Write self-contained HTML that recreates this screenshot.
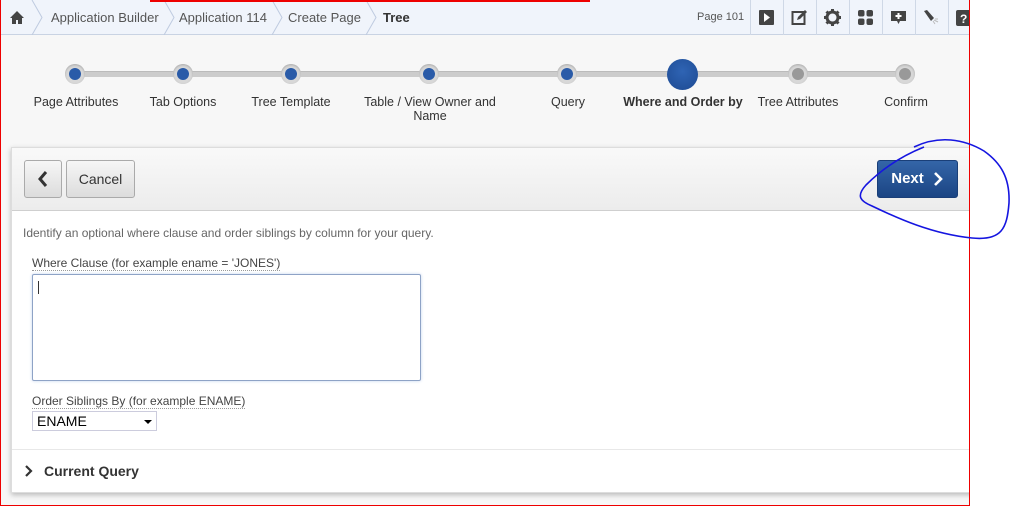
<!DOCTYPE html>
<html><head><style>
*{margin:0;padding:0;box-sizing:border-box}
body{width:1012px;height:506px;background:#fff;font-family:"Liberation Sans",Arial,sans-serif;position:relative;overflow:hidden}
#frame{position:absolute;left:0;top:0;width:970px;height:506px;border:1px solid #e00;border-top:none;overflow:hidden;background:#f7f7f7}
#top{position:absolute;left:0;top:0;width:970px;height:35px;background:#f0f4fb;border-bottom:1px solid #c9d3e3}
.bc{position:absolute;top:0;height:35px;line-height:35px;font-size:13px;color:#555}
.sep{position:absolute;top:0;width:1px;height:35px;background:#cfd8e6}
.chev{position:absolute;top:0}
.ic{position:absolute;top:9px;width:17px;height:17px}
.step{position:absolute;top:64px;width:20px;height:20px;border-radius:50%;background:#d8d8d8;box-shadow:inset 0 1px 2px #aaa}
.step i{position:absolute;left:4px;top:4px;width:12px;height:12px;border-radius:50%;background:#2a5ba8}
.step.g i{background:#999}
.lbl{position:absolute;top:95px;font-size:12.5px;color:#333;text-align:center;width:150px;line-height:14px}
#panel{position:absolute;left:10px;top:147px;width:970px;height:346px;background:#fff;border:1px solid #ddd;box-shadow:0 2px 5px rgba(0,0,0,.25)}
#tb{position:absolute;left:0;top:0;width:100%;height:63px;background:linear-gradient(#f9f9f9,#ececec);border-bottom:1px solid #cfcfcf}
.btn{position:absolute;top:12px;height:38px;border:1px solid #aaa;border-radius:3px;background:linear-gradient(#f6f6f6,#dcdcdc);font-size:14px;color:#333;line-height:36px;text-align:center}
</style></head><body>
<div id="frame">
<div id="top">
 <svg style="position:absolute;left:8px;top:10px" width="16" height="15" viewBox="0 0 16 15"><path d="M8 1L1 8h2v6h4v-4h2v4h4V8h2z" fill="#444"/></svg>
 <svg class="chev" style="left:30px" width="12" height="35"><path d="M1 0L11 17.5L1 35" fill="none" stroke="#bfcbe0"/></svg>
 <div class="bc" style="left:50px">Application Builder</div>
 <svg class="chev" style="left:162px" width="12" height="35"><path d="M1 0L11 17.5L1 35" fill="none" stroke="#bfcbe0"/></svg>
 <div class="bc" style="left:178px">Application 114</div>
 <svg class="chev" style="left:270px" width="12" height="35"><path d="M1 0L11 17.5L1 35" fill="none" stroke="#bfcbe0"/></svg>
 <div class="bc" style="left:287px">Create Page</div>
 <svg class="chev" style="left:364px" width="12" height="35"><path d="M1 0L11 17.5L1 35" fill="none" stroke="#bfcbe0"/></svg>
 <div class="bc" style="left:382px;color:#333;font-weight:bold">Tree</div>
 <div class="bc" style="left:696px;font-size:11px">Page 101</div>
 <div class="sep" style="left:749px"></div><div class="sep" style="left:782px"></div><div class="sep" style="left:815px"></div><div class="sep" style="left:848px"></div><div class="sep" style="left:881px"></div><div class="sep" style="left:914px"></div><div class="sep" style="left:947px"></div>
 <svg class="ic" style="left:757px" viewBox="0 0 17 17"><rect x="1" y="1" width="15" height="15" rx="1" fill="#444"/><path d="M6 4l6 4.5L6 13z" fill="#fff"/></svg>
 <svg class="ic" style="left:790px" viewBox="0 0 17 17"><rect x="1.5" y="3" width="12" height="12" fill="none" stroke="#444" stroke-width="2"/><path d="M6 11l1-3 7-7 2 2-7 7z" fill="#444"/></svg>
 <svg class="ic" style="left:823px" viewBox="0 0 17 17"><circle cx="8.5" cy="8.5" r="5.5" fill="none" stroke="#444" stroke-width="3"/><g stroke="#444" stroke-width="3"><path d="M8.5 0v4M8.5 13v4M0 8.5h4M13 8.5h4M2.5 2.5l3 3M11.5 11.5l3 3M14.5 2.5l-3 3M5.5 11.5l-3 3"/></g></svg>
 <svg class="ic" style="left:856px" viewBox="0 0 17 17"><rect x="1" y="1" width="6.5" height="6.5" rx="2" fill="#444"/><rect x="9.5" y="1" width="6.5" height="6.5" rx="2" fill="#444"/><rect x="1" y="9.5" width="6.5" height="6.5" rx="2" fill="#444"/><rect x="9.5" y="9.5" width="6.5" height="6.5" rx="2" fill="#444"/></svg>
 <svg class="ic" style="left:889px" viewBox="0 0 17 17"><path d="M1 2h15v10h-6l-1.5 3-1.5-3H1z" fill="#444"/><path d="M8.5 4v6M5.5 7h6" stroke="#fff" stroke-width="2"/></svg>
 <svg class="ic" style="left:922px" viewBox="0 0 17 17"><path d="M1 2l3-1 7 8-3 3z" fill="#444"/><path d="M11 11l4 2M12 10l3 0M10 12l2 3" stroke="#bbb"/></svg>
 <svg class="ic" style="left:955px" viewBox="0 0 17 17"><rect x="0" y="1" width="16" height="16" rx="2" fill="#444"/><text x="4" y="14" font-size="12" font-weight="bold" fill="#fff" font-family="Liberation Sans">?</text></svg>
</div>
<div style="position:absolute;left:74px;top:71px;width:830px;height:6px;background:#ccc;border-top:1px solid #bbb"></div>
<div class="step" style="left:64px"><i></i></div>
<div class="step" style="left:172px"><i></i></div>
<div class="step" style="left:280px"><i></i></div>
<div class="step" style="left:418px"><i></i></div>
<div class="step" style="left:556px"><i></i></div>
<div style="position:absolute;left:666px;top:59px;width:31px;height:31px;border-radius:50%;background:radial-gradient(circle at 50% 40%,#2f64b4,#1d4a92)"></div>
<div class="step g" style="left:787px"><i></i></div>
<div class="step g" style="left:894px"><i></i></div>
<div class="lbl" style="left:0px">Page Attributes</div>
<div class="lbl" style="left:107px">Tab Options</div>
<div class="lbl" style="left:215px">Tree Template</div>
<div class="lbl" style="left:354px">Table / View Owner and Name</div>
<div class="lbl" style="left:492px">Query</div>
<div class="lbl" style="left:607px;font-weight:bold">Where and Order by</div>
<div class="lbl" style="left:722px">Tree Attributes</div>
<div class="lbl" style="left:830px">Confirm</div>
<div id="panel">
 <div id="tb">
  <div class="btn" style="left:12px;width:38px"><svg width="14" height="36" viewBox="0 0 14 36" style="display:block;margin:0 auto"><path d="M10 11l-6 7 6 7" fill="none" stroke="#333" stroke-width="3"/></svg></div>
  <div class="btn" style="left:54px;width:69px">Cancel</div>
  <div class="btn" style="left:865px;width:81px;background:linear-gradient(#3465a8,#1b4584);border-color:#1a3f78;color:#fff;font-weight:bold;font-size:15px;display:flex;align-items:center;justify-content:center;gap:8px"><span>Next</span><svg width="12" height="16" viewBox="0 0 12 16"><path d="M3 2l6 6-6 6" fill="none" stroke="#fff" stroke-width="2.6"/></svg></div>
 </div>
 <div style="position:absolute;left:11px;top:78px;font-size:12px;color:#666">Identify an optional where clause and order siblings by column for your query.</div>
 <div style="position:absolute;left:20px;top:108px;font-size:12px;color:#444;border-bottom:1px dotted #999;line-height:14px">Where Clause (for example ename = 'JONES')</div>
 <div style="position:absolute;left:20px;top:126px;width:389px;height:107px;border:1px solid #8ea3c6;border-radius:2px;box-shadow:0 0 3px #c5d5ee"><div style="position:absolute;left:5px;top:6px;width:1px;height:13px;background:#333"></div></div>
 <div style="position:absolute;left:20px;top:246px;font-size:12px;color:#444;border-bottom:1px dotted #999;line-height:14px">Order Siblings By (for example ENAME)</div>
 <div style="position:absolute;left:20px;top:263px;width:125px;height:20px;border:1px solid #ccd;font-size:14px;line-height:18px;padding-left:4px;color:#000">ENAME<span style="position:absolute;right:4px;top:8px;border:4px solid transparent;border-top:4px solid #000"></span></div>
 <div style="position:absolute;left:0;top:301px;width:100%;height:1px;background:#e8e8e8"></div>
 <svg style="position:absolute;left:12px;top:317px" width="10" height="12"><path d="M2 1l5 5-5 5" fill="none" stroke="#333" stroke-width="2.2"/></svg>
 <div style="position:absolute;left:32px;top:315px;font-size:14px;font-weight:bold;color:#333">Current Query</div>
</div>
</div>
<div style="position:absolute;left:150px;top:0;width:440px;height:2px;background:#e00"></div>
<svg style="position:absolute;left:850px;top:135px" width="162" height="110" viewBox="850 135 162 110"><path d="M924 147c-20 8-40 20-58 38-10 11-6 16 6 21 25 12 60 28 100 32 30 3 35-10 37-35 1-25-8-40-25-52-20-12-45-16-70-4" fill="none" stroke="#1515e0" stroke-width="1.6"/></svg>
</body></html>
